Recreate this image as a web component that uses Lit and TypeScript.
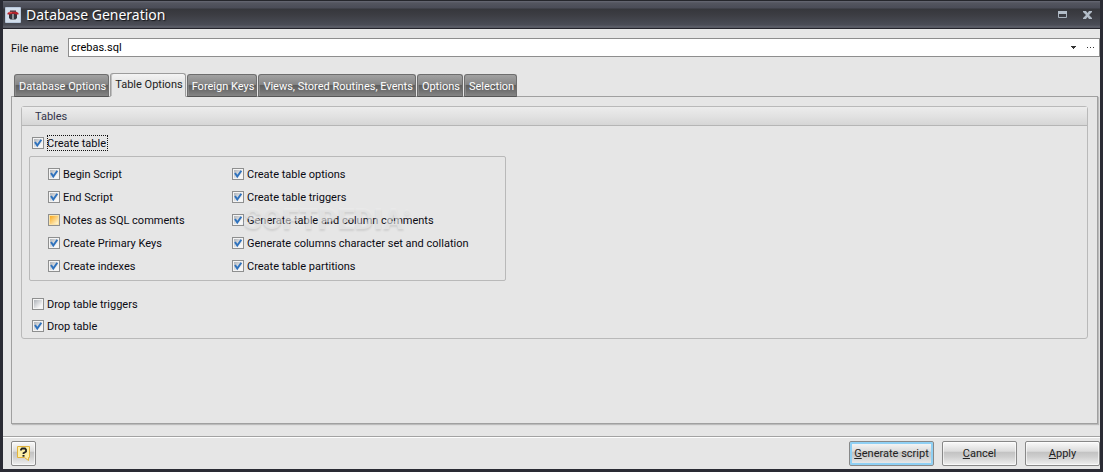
import { LitElement, html, css } from "lit";
import { customElement, property, state } from "lit/decorators.js";
import { classMap } from "lit/directives/class-map.js";

@customElement("option-check")
class OptionCheck extends LitElement {
  @property() label = "";
  @property({ type: Boolean }) checked = false;
  @property({ type: Boolean }) hot = false;
  @property({ type: Boolean }) focusMark = false;

  static styles = css`
    :host {
      display: block;
      font: 11px/18px Roboto, "Noto Sans", sans-serif;
      color: #0a0a12;
    }
    label {
      display: flex;
      align-items: center;
      gap: 3px;
      width: fit-content;
      height: 16px;
    }
    .box {
      display: grid;
      width: 12px;
      height: 12px;
    }
    .box > * {
      grid-area: 1 / 1;
    }
    input {
      appearance: none;
      box-sizing: border-box;
      width: 12px;
      height: 12px;
      margin: 0;
      border: 1px solid #8e8f8f;
      background: linear-gradient(135deg, #aeb3b9, #f6f6f6 80%) content-box, #f4f4f4;
      padding: 1px;
      outline: none;
    }
    input.hot {
      background: linear-gradient(135deg, #f9a81c, #fdf0c8 90%) content-box, #fbe3a8;
    }
    svg {
      width: 12px;
      height: 12px;
      pointer-events: none;
    }
    .text {
      height: 16px;
      padding-right: 2px;
      white-space: nowrap;
    }
    .text.focus {
      outline: 1px dotted #111;
      outline-offset: -1px;
    }
  `;

  render() {
    return html`<label>
      <span class="box">
        <input
          type="checkbox"
          class=${classMap({ hot: this.hot })}
          .checked=${this.checked}
          @change=${(e: Event) => (this.checked = (e.target as HTMLInputElement).checked)}
        />
        ${this.checked
          ? html`<svg viewBox="0 0 12 12">
              <path d="M3 5L5.300 8.500L9.300 2.800" fill="none" stroke="#2f72bd" stroke-width="2" />
            </svg>`
          : ""}
      </span>
      <span class=${classMap({ text: true, focus: this.focusMark })}>${this.label}</span>
    </label>`;
  }
}

const TABS = [
  "Database Options",
  "Table Options",
  "Foreign Keys",
  "Views, Stored Routines, Events",
  "Options",
  "Selection",
];

const LEFT = [
  { label: "Begin Script", on: true },
  { label: "End Script", on: true },
  { label: "Notes as SQL comments", on: false, hot: true },
  { label: "Create Primary Keys", on: true },
  { label: "Create indexes", on: true },
];

const RIGHT = [
  { label: "Create table options", on: true },
  { label: "Create table triggers", on: true },
  { label: "Generate table and column comments", on: true },
  { label: "Generate columns character set and collation", on: true },
  { label: "Create table partitions", on: true },
];

@customElement("app-root")
class AppRoot extends LitElement {
  @state() private active = 1;

  static styles = css`
    :host {
      display: flex;
      flex-direction: column;
      box-sizing: border-box;
      min-height: 100vh;
      border: solid #2a2b34;
      border-width: 0 3px 3px;
      background: #e6e6e6;
      font: 11px/14px Roboto, "Liberation Sans", sans-serif;
      color: #111;
    }
    button {
      font: inherit;
      color: inherit;
      margin: 0;
      padding: 0;
      border: 0;
      background: none;
      white-space: nowrap;
    }
    header {
      display: flex;
      align-items: center;
      box-sizing: border-box;
      height: 29px;
      padding: 0 0 0 2px;
      border-top: 1px solid #25262c;
      border-bottom: 1px solid #24242c;
      background: linear-gradient(#676974 0, #53555f 2px, #4a4c57 7px, #36373c 8px, #3c3d43 14px, #4a4c56 24px, #60626c 26px, #50525c 27px);
    }
    h1 {
      flex: 1;
      margin: 0 0 0 5px;
      font: 14px/18px "Noto Sans", sans-serif;
      color: #fff;
      text-shadow: 1px 1px 1px #15161a;
    }
    .logo {
      width: 16px;
      height: 16px;
    }
    .caption {
      width: 25px;
      height: 16px;
    }
    .caption svg {
      display: block;
      margin: 0 auto;
    }
    .file {
      display: flex;
      align-items: center;
      padding: 9px 0 0 8px;
    }
    .file label {
      width: 57px;
      padding-top: 2px;
    }
    .combo {
      flex: 1;
      display: flex;
      box-sizing: border-box;
      height: 19px;
      border: 1px solid #8e8e8e;
      background: #fff;
    }
    .combo input {
      flex: 1;
      min-width: 0;
      border: 0;
      padding: 0 2px;
      outline: none;
      background: none;
      font: inherit;
      color: #000;
    }
    .combo button {
      width: 17px;
    }
    .combo svg {
      display: block;
      margin: 0 auto;
    }
    .tabs {
      z-index: 1;
      display: flex;
      align-items: flex-end;
      gap: 1px;
      height: 24px;
      margin: 16px 0 0 11px;
    }
    .tab {
      box-sizing: border-box;
      height: 23px;
      padding: 2px 2px 0 4px;
      border: 1px solid #6e6e6e;
      border-bottom-color: #555;
      border-radius: 3px 3px 0 0;
      color: #fff;
      background: linear-gradient(#a2a2a2, #868686 45%, #5f5f5f 50%, #6c6c6c 70%, #858585);
      box-shadow: inset 1px 0 #9a9a9a88;
    }
    .tab.active {
      height: 24px;
      padding-top: 0;
      color: #222;
      background: linear-gradient(#f4f4f4, #e6e6e6 8px);
      border-color: #9c9c9c;
      border-bottom-color: #e6e6e6;
    }
    .panel {
      flex: 1;
      margin: -1px 2px 12px 8px;
      padding: 9px;
      border: 1px solid #a0a0a0;
      box-shadow: 1px 1px 1px #bbb;
    }
    .group {
      border: 1px solid #b9b9b9;
      border-radius: 3px;
      box-shadow: inset 0 1px #f2f2f2;
      padding-bottom: 4px;
    }
    h2 {
      margin: 0;
      height: 18px;
      padding-left: 13px;
      border-bottom: 1px solid #b5b5b5;
      background: linear-gradient(#ececec, #e2e2e2 50%, #d6d6d6);
      font: 11px/20px Roboto, "Noto Sans", sans-serif;
      color: #33334a;
    }
    .outer {
      display: block;
      margin-left: 10px;
    }
    .first {
      margin-top: 9px;
    }
    .inner {
      position: relative;
      display: grid;
      grid-template-columns: 184px 1fr;
      box-sizing: border-box;
      width: 477px;
      margin: 5px 0 15px 7px;
      padding: 9px 0 6px 18px;
      border: 1px solid #b9b9b9;
      border-radius: 2px;
    }
    .col {
      display: grid;
      gap: 7px;
    }
    .col.outer {
      gap: 6px;
    }
    .mark {
      position: absolute;
      left: 213px;
      top: 44px;
      font: 900 30px/36px Roboto, sans-serif;
      color: #ececec99;
      text-shadow: 0 2px 2px #00000018;
      pointer-events: none;
    }
    .mark sup {
      font-size: 8px;
      line-height: 8px;
      vertical-align: 14px;
    }
    footer {
      display: flex;
      align-items: flex-start;
      gap: 8px;
      height: 28px;
      padding: 4px 0 0 8px;
      border-top: 1px solid #a3a3a3;
      box-shadow: inset 0 1px #fff;
    }
    .push {
      box-sizing: border-box;
      width: 75px;
      height: 25px;
      border: 1px solid #888;
      border-radius: 2px;
      color: #222;
      box-shadow: inset 0 0 0 1px #ffffff99;
      background: linear-gradient(#fafafa, #dcdcdc 40%, #c3c3c3 45%, #cfcfcf 65%, #f0f0f0);
    }
    .primary {
      width: 85px;
      box-shadow: inset 0 0 0 2px #8fd0f4;
    }
    .help {
      width: 25px;
      margin-right: auto;
    }
    .help svg {
      display: block;
      margin: 0 auto;
    }
  `;

  private checks(items: { label: string; on: boolean; hot?: boolean }[]) {
    return html`<div class="col">
      ${items.map(
        (i) => html`<option-check .label=${i.label} .checked=${i.on} .hot=${!!i.hot}></option-check>`
      )}
    </div>`;
  }

  render() {
    return html`
      <header>
        <svg class="logo" viewBox="0 0 16 16">
          <rect width="16" height="16" rx="1" fill="#b9c8dc" />
          <rect x="1" y="1" width="14" height="14" fill="#d3deeb" />
          <path d="M4 5.500h8V11l-1.500 1.500h-5L4 11z" fill="#34343e" />
          <path d="M7 7h2v5.500H7z" fill="#8c9097" />
          <path d="M2.500 6L5 4.500h6L13.500 6v1.500H11L9.500 6.800h-3L5 7.500H2.500z" fill="#b5222c" />
          <path d="M5 3.500h6v1.300H5z" fill="#4a2a34" />
          <path d="M4 5.200h3v1H4z" fill="#e65a55" />
        </svg>
        <h1>Database Generation</h1>
        <button class="caption" aria-label="Maximize">
          <svg width="9" height="7" viewBox="0 0 9 7">
            <path d="M.5 .5h8v6h-8z" fill="none" stroke="#a9b3be" />
            <path d="M0 0h9v3H0z" fill="#b3bdc8" />
          </svg>
        </button>
        <button class="caption" aria-label="Close">
          <svg width="9" height="8" viewBox="0 0 9 8">
            <path d="M0 0h3l1.500 2L6 0h3v1L6 4l3 3v1H6L4.500 6 3 8H0V7l3-3-3-3z" fill="#b3bdc8" />
          </svg>
        </button>
      </header>

      <div class="file">
        <label for="file">File name</label>
        <div class="combo">
          <input id="file" type="text" value="crebas.sql" />
          <button aria-label="History">
            <svg width="5" height="3" viewBox="0 0 5 3" shape-rendering="crispEdges">
              <path d="M0 0h5v1H4v1H3v1H2V2H1V1H0z" fill="#333" />
            </svg>
          </button>
          <button aria-label="Browse">
            <svg width="7" height="1" viewBox="0 0 7 1" shape-rendering="crispEdges">
              <path d="M0 0h1v1H0zM3 0h1v1H3zM6 0h1v1H6z" fill="#333" />
            </svg>
          </button>
        </div>
      </div>

      <div class="tabs" role="tablist">
        ${TABS.map(
          (t, i) => html`<button
            role="tab"
            aria-selected=${i === this.active}
            class=${classMap({ tab: true, active: i === this.active })}
            @click=${() => (this.active = i)}
          >${t}</button>`
        )}
      </div>

      <main class="panel" role="tabpanel">
        <section class="group">
          <h2>Tables</h2>
          <option-check class="outer first" label="Create table" checked .focusMark=${true}></option-check>
          <div class="inner">
            ${this.checks(LEFT)} ${this.checks(RIGHT)}
            <div class="mark">SOFTPEDIA<sup>®</sup></div>
          </div>
          <div class="col outer">
            <option-check label="Drop table triggers"></option-check>
            <option-check label="Drop table" checked></option-check>
          </div>
        </section>
      </main>

      <footer>
        <button class="push help" aria-label="Help">
          <svg width="15" height="17" viewBox="0 0 15 17">
            <path d="M1.500 1.500h12v11h-1v3l-4-3h-7z" fill="#fdf0a8" stroke="#e2b23c" />
            <path d="M5 5.500V4.500l1-1h3l1 1v2L7.500 8.200V9" fill="none" stroke="#222" stroke-width="1.800" />
            <path d="M6.500 10h2v1.700h-2z" fill="#222" />
          </svg>
        </button>
        <button class="push primary"><u>G</u>enerate script</button>
        <button class="push"><u>C</u>ancel</button>
        <button class="push"><u>A</u>pply</button>
      </footer>
    `;
  }
}
